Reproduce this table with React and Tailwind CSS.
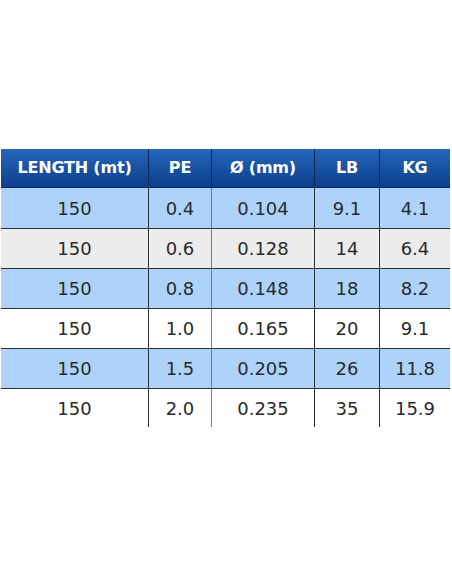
import React from "react";

const headers = ["LENGTH (mt)", "PE", "Ø (mm)", "LB", "KG"];

const rows = [
  ["150", "0.4", "0.104", "9.1", "4.1"],
  ["150", "0.6", "0.128", "14", "6.4"],
  ["150", "0.8", "0.148", "18", "8.2"],
  ["150", "1.0", "0.165", "20", "9.1"],
  ["150", "1.5", "0.205", "26", "11.8"],
  ["150", "2.0", "0.235", "35", "15.9"],
];

// row backgrounds, top to bottom
const rowBg = ["bg-[#aed3fa]", "bg-[#ececec]", "bg-[#aed3fa]", "bg-white", "bg-[#aed3fa]", "bg-white"];

const widths = ["w-[147px]", "w-[63px]", "w-[103px]", "w-[65px]", "w-[71px]"];

// the PE | Ø line is lighter than the others
const bodyBorder = ["", "border-l border-[#2b2f36]", "border-l border-[#7a7a7a]", "border-l border-[#2b2f36]", "border-l border-[#2b2f36]"];

const App = () => {
  return (
    <div className="w-[452px] h-[584px] bg-white pt-[149px] pl-px font-['DejaVu_Sans',sans-serif]">
      <div className="w-[449px]">
        <div className="flex h-[39px] bg-gradient-to-b from-[#2766ba] to-[#0c3f8d] border-b border-[#0a2552]">
          {headers.map((h, i) => (
            <div
              key={h}
              className={`${widths[i]} ${i > 0 ? "border-l border-[#0a2552]" : ""} flex items-center justify-center text-white text-[16px] font-bold tracking-[-0.2px]`}
            >
              {h}
            </div>
          ))}
        </div>

        {rows.map((r, ri) => (
          <div
            key={ri}
            className={`flex ${ri === 5 ? "h-[39px]" : "h-[40px]"} ${rowBg[ri]} ${ri > 0 ? "border-t border-[#2b2f36]" : ""}`}
          >
            {r.map((c, ci) => (
              <div
                key={ci}
                className={`${widths[ci]} ${bodyBorder[ci]} flex items-center justify-center text-[#2a2a2a] text-[18px]`}
              >
                {c}
              </div>
            ))}
          </div>
        ))}
      </div>
    </div>
  );
};

export default App;
